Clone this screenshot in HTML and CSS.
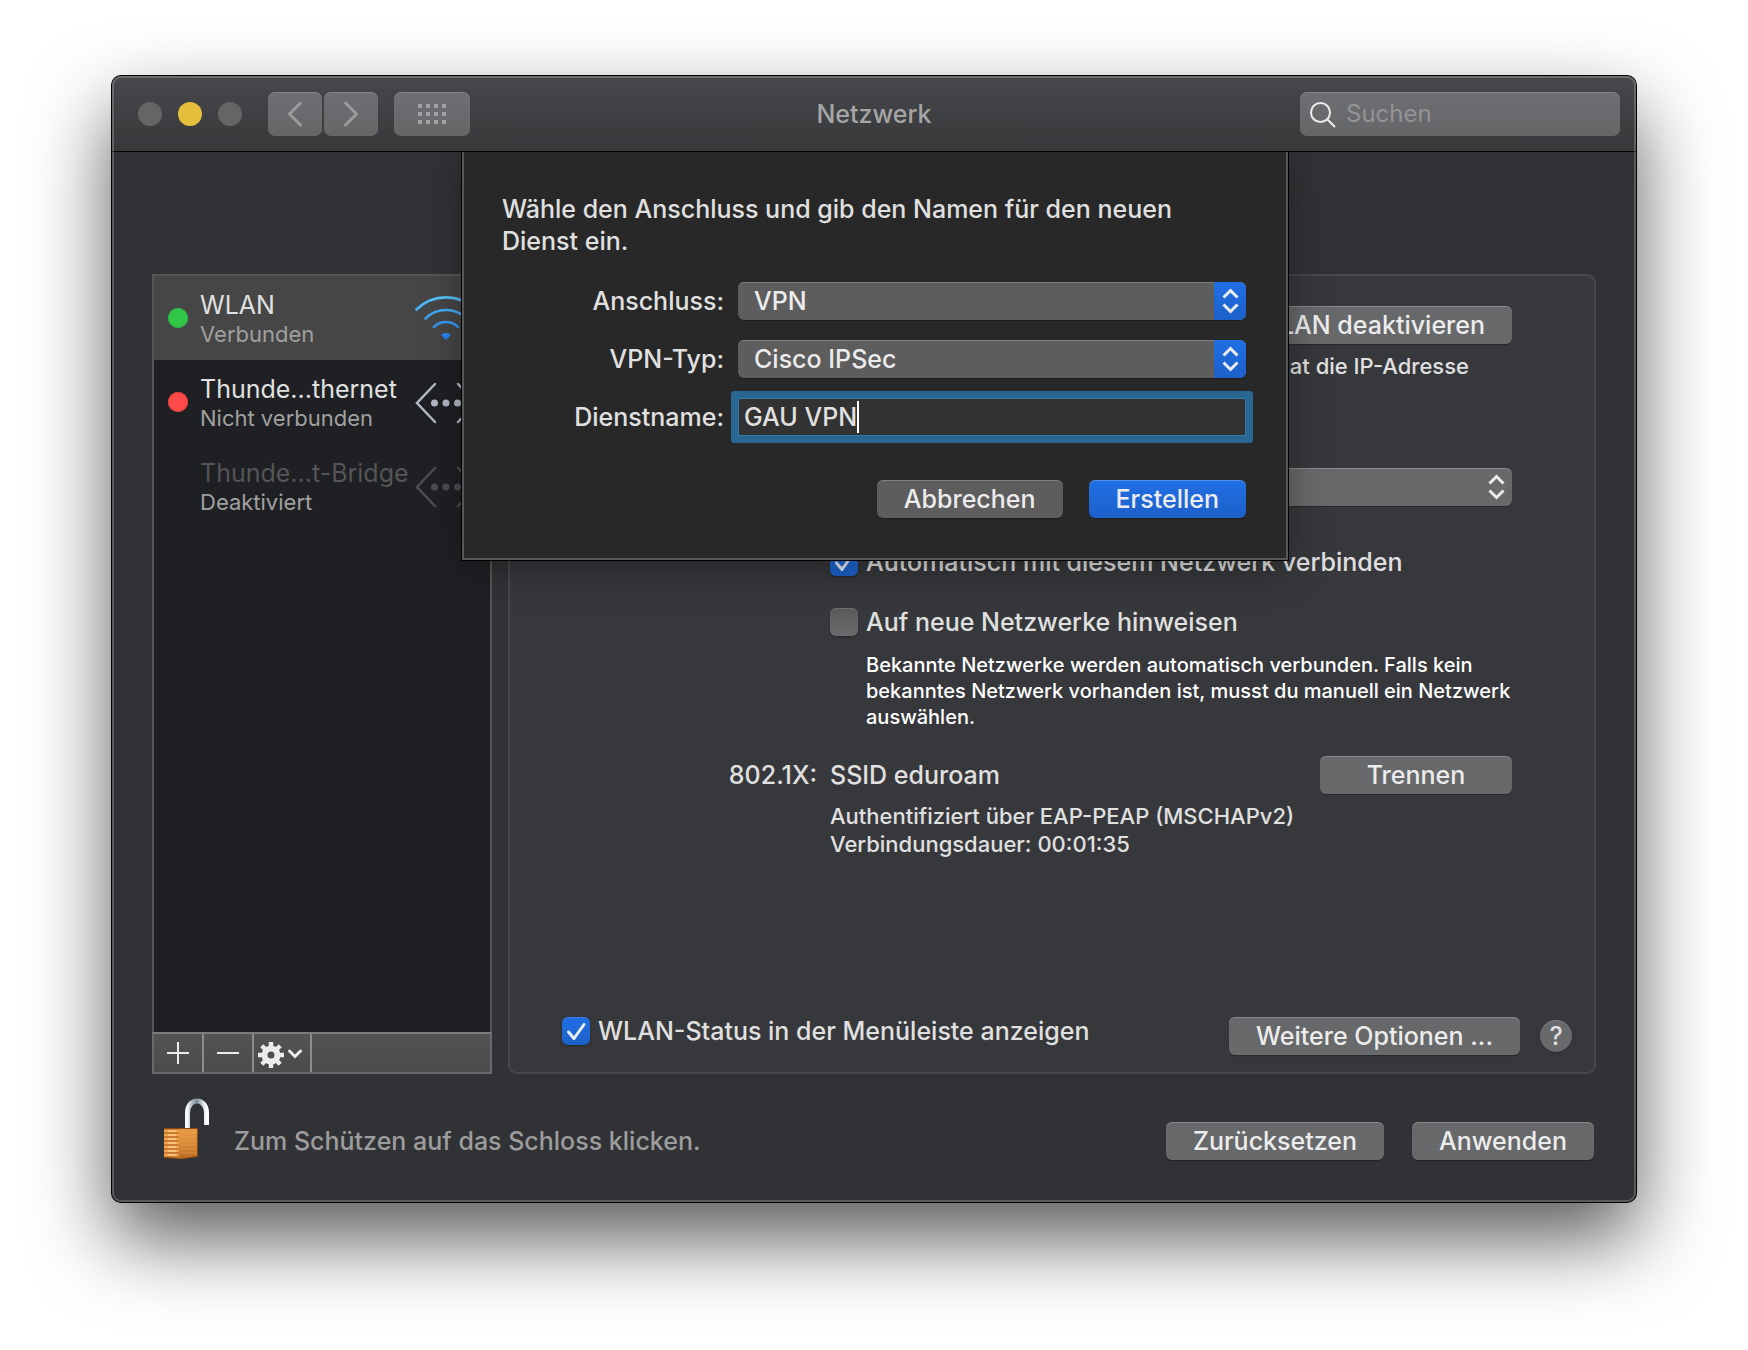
FILE: index.html
```html
<!DOCTYPE html>
<html lang="de">
<head>
<meta charset="utf-8">
<title>Netzwerk</title>
<link rel="stylesheet" href="styles.css">
</head>
<body>
<div class="window">
  <header class="titlebar">
    <div class="titlebar-left">
      <div class="lights">
        <button class="light" type="button" aria-label="Schließen"></button>
        <button class="light light-min" type="button" aria-label="Minimieren"></button>
        <button class="light" type="button" aria-label="Zoomen"></button>
      </div>
      <div class="nav">
        <button class="tool" type="button" aria-label="Zurück"><svg width="54" height="44" viewBox="0 0 54 44"><path d="M32.500 11 21.500 22l11 11"/></svg></button>
        <button class="tool" type="button" aria-label="Vorwärts"><svg width="54" height="44" viewBox="0 0 54 44"><path d="M21.500 11l11 11-11 11"/></svg></button>
      </div>
      <button class="tool" type="button" aria-label="Alle einblenden"><svg class="dots" width="76" height="44" viewBox="0 0 76 44"><path d="M24 12h4v4h-4zM32 12h4v4h-4zM40 12h4v4h-4zM48 12h4v4h-4zM24 20h4v4h-4zM32 20h4v4h-4zM40 20h4v4h-4zM48 20h4v4h-4zM24 28h4v4h-4zM32 28h4v4h-4zM40 28h4v4h-4zM48 28h4v4h-4z"/></svg></button>
    </div>
    <h1 class="title">Netzwerk</h1>
    <label class="search">
      <svg width="26" height="28" viewBox="0 0 26 28" aria-hidden="true"><circle cx="10.500" cy="12.500" r="9.500"/><path d="M17.300 19.300l7.700 7.700"/></svg>
      <input class="search-input" type="search" placeholder="Suchen" aria-label="Suchen">
    </label>
  </header>

  <main class="body">
    <div class="columns">
      <section class="sidebar">
        <ul class="services">
          <li class="service service-active">
            <span class="status status-on"></span>
            <div class="service-text"><div class="service-name">WLAN</div><div class="service-state">Verbunden</div></div>
            <svg class="service-icon" width="64" height="48" viewBox="0 0 64 48" aria-hidden="true">
              <defs><linearGradient id="wifi" gradientUnits="userSpaceOnUse" x1="0" y1="0" x2="0" y2="48"><stop offset="0" stop-color="#5ac8fa"/><stop offset="1" stop-color="#1d7cf2"/></linearGradient></defs>
              <g fill="none" stroke="url(#wifi)" stroke-width="2.600" stroke-linecap="round"><path d="M2.500 15.500a42 42 0 0 1 59 0"/><path d="M11.500 24.500a29 29 0 0 1 41 0"/><path d="M20 33a17 17 0 0 1 24 0"/></g>
              <path d="M27 41a7 7 0 0 1 10 0l-5 5z" fill="url(#wifi)"/>
            </svg>
          </li>
          <li class="service">
            <span class="status status-off"></span>
            <div class="service-text"><div class="service-name">Thunde...thernet</div><div class="service-state">Nicht verbunden</div></div>
            <svg class="service-icon ethernet" width="64" height="48" viewBox="0 0 64 48" aria-hidden="true"><path d="M21 6 3 25l18 19M44 6l18 19-18 19"/><g><circle cx="20.500" cy="25" r="3.500"/><circle cx="32" cy="25" r="3.500"/><circle cx="43.500" cy="25" r="3.500"/></g></svg>
          </li>
          <li class="service service-disabled">
            <span class="status"></span>
            <div class="service-text"><div class="service-name">Thunde...t-Bridge</div><div class="service-state">Deaktiviert</div></div>
            <svg class="service-icon ethernet" width="64" height="48" viewBox="0 0 64 48" aria-hidden="true"><path d="M21 6 3 25l18 19M44 6l18 19-18 19"/><g><circle cx="20.500" cy="25" r="3.500"/><circle cx="32" cy="25" r="3.500"/><circle cx="43.500" cy="25" r="3.500"/></g></svg>
          </li>
        </ul>
        <div class="list-bar">
          <button class="bar-button" type="button" aria-label="Hinzufügen"><svg width="48" height="38" viewBox="0 0 48 38"><path d="M13 19h22M24 8v22"/></svg></button>
          <button class="bar-button" type="button" aria-label="Entfernen"><svg width="48" height="38" viewBox="0 0 48 38"><path d="M13 19h22"/></svg></button>
          <button class="bar-button" type="button" aria-label="Aktionen"><svg width="56" height="38" viewBox="0 0 56 38">
            <g transform="translate(17 21)"><circle r="6.500" stroke-width="6"/><g stroke-width="4.400"><path d="M0-7v-6M0 7v6M-7 0h-6M7 0h6M-5-5l-4.200-4.200M5-5l4.200-4.200M-5 5l-4.200 4.200M5 5l4.200 4.200"/></g></g>
            <path class="round" d="M35.500 17l5.500 5.500 5.500-5.500"/></svg></button>
        </div>
      </section>

      <section class="panel">
        <div class="settings">
          <div class="row row-end"><button class="button" type="button">WLAN deaktivieren</button></div>
          <p class="address">hat die IP-Adresse</p>
          <div class="row network">
            <div class="popup">
              <select class="select" aria-label="Netzwerkname"><option value="eduroam" label=" "></option></select>
              <svg class="popup-arrows" width="32" height="38" viewBox="0 0 32 38" aria-hidden="true"><path d="M9.500 15.500l7-7 7 7M9.500 22.500l7 7 7-7"/></svg>
            </div>
          </div>
          <label class="check auto"><input type="checkbox" checked><span>Automatisch mit diesem Netzwerk verbinden</span></label>
          <label class="check ask"><input type="checkbox"><span>Auf neue Netzwerke hinweisen</span></label>
          <p class="hint">Bekannte Netzwerke werden automatisch verbunden. Falls kein bekanntes Netzwerk vorhanden ist, musst du manuell ein Netzwerk auswählen.</p>
          <div class="auth">
            <span class="auth-label">802.1X:</span>
            <span class="auth-value">SSID eduroam</span>
            <button class="button button-wide" type="button">Trennen</button>
          </div>
          <p class="auth-detail">Authentifiziert über EAP-PEAP (MSCHAPv2)<br>Verbindungsdauer: 00:01:35</p>
        </div>
        <div class="panel-bottom">
          <label class="check"><input type="checkbox" checked><span>WLAN-Status in der Menüleiste anzeigen</span></label>
          <div class="panel-actions">
            <button class="button more" type="button">Weitere Optionen ...</button>
            <button class="help" type="button" aria-label="Hilfe">?</button>
          </div>
        </div>
      </section>
    </div>

    <footer class="footer">
      <button class="lock" type="button" aria-label="Schloss">
        <svg width="48" height="62" viewBox="0 0 48 62">
          <defs>
            <linearGradient id="steel" x1="0" x2="1" y1="0" y2="0"><stop offset="0" stop-color="#f4f8fa"/><stop offset=".2" stop-color="#b4c0c7"/><stop offset=".5" stop-color="#7d8c95"/><stop offset=".8" stop-color="#cfdbe1"/><stop offset="1" stop-color="#ffffff"/></linearGradient>
            <pattern id="ribs" width="18" height="4" patternUnits="userSpaceOnUse"><rect width="18" height="4" fill="#c97a30"/><rect width="18" height="2" fill="#eea64f"/><rect x="5" width="8" height="2" fill="#f9c377"/></pattern>
            <linearGradient id="brass" x1="0" x2="0" y1="0" y2="1"><stop offset="0" stop-color="#e79a45"/><stop offset=".5" stop-color="#d78936"/><stop offset="1" stop-color="#b8691f"/></linearGradient>
          </defs>
          <path d="M24.500 31V15c0-16 19-16 19 0v12" fill="none" stroke="url(#steel)" stroke-width="5"/>
          <path d="M1 30h34v29l-16 2-18-1z" fill="#8a4812"/>
          <path d="M1 31h16v29l-16-1z" fill="url(#ribs)"/>
          <path d="M16 31h18v27l-18 3z" fill="url(#brass)"/>
          <path d="M17 35h16M17 39h16M17 43h16M17 47h16M17 51h16M17 55h16" stroke="#f0ab59" stroke-width="1" opacity=".5"/>
        </svg>
      </button>
      <span class="footer-text">Zum Schützen auf das Schloss klicken.</span>
      <div class="footer-actions">
        <button class="button" type="button">Zurücksetzen</button>
        <button class="button" type="button">Anwenden</button>
      </div>
    </footer>

    <form class="sheet" role="dialog" aria-label="Neuer Dienst">
      <p class="sheet-text">Wähle den Anschluss und gib den Namen für den neuen Dienst ein.</p>
      <div class="fields">
        <label class="field-label" for="port">Anschluss:</label>
        <div class="popup popup-blue">
          <select class="select" id="port"><option>VPN</option></select>
          <svg class="popup-arrows" width="32" height="38" viewBox="0 0 32 38" aria-hidden="true"><path d="M9.500 15.500l7-7 7 7M9.500 22.500l7 7 7-7"/></svg>
        </div>
        <label class="field-label" for="type">VPN-Typ:</label>
        <div class="popup popup-blue">
          <select class="select" id="type"><option>Cisco IPSec</option></select>
          <svg class="popup-arrows" width="32" height="38" viewBox="0 0 32 38" aria-hidden="true"><path d="M9.500 15.500l7-7 7 7M9.500 22.500l7 7 7-7"/></svg>
        </div>
        <label class="field-label" for="name">Dienstname:</label>
        <div class="name-box"><input class="name-input" id="name" type="text" size="6" value="GAU VPN"><span class="caret"></span></div>
      </div>
      <div class="sheet-actions">
        <button class="button button-dark" type="button">Abbrechen</button>
        <button class="button button-primary" type="button">Erstellen</button>
      </div>
    </form>
  </main>
</div>
</body>
</html>
```
FILE: styles.css
```css
* { box-sizing: border-box; }

body {
  margin: 0;
  padding: 76px 112px 148px;
  background: #fff;
  color: #e0e0e0;
  font: 500 25px/32px Inter, "Liberation Sans", sans-serif;
}

h1, p, ul { margin: 0; padding: 0; font-weight: inherit; }
button, input, select { margin: 0; font: inherit; color: inherit; }
button { border: 0; padding: 0; background: none; }
svg { display: block; }

.window {
  position: relative;
  display: flex;
  flex-direction: column;
  min-height: calc(100vh - 224px);
  border-radius: 9px;
  background: #313235;
  box-shadow: 0 0 0 1px #000, 0 36px 80px rgba(0, 0, 0, .66);
}

.window::after {
  content: "";
  position: absolute;
  inset: 0;
  border: 2px solid rgba(255, 255, 255, .2);
  border-radius: 9px;
  pointer-events: none;
}

/* Title bar */
.titlebar {
  display: grid;
  grid-template-columns: 1fr auto 1fr;
  align-items: center;
  height: 76px;
  padding: 0 16px;
  border-bottom: 1px solid #000;
  border-radius: 9px 9px 0 0;
  background: linear-gradient(#47484b, #37383a);
}

.titlebar-left { display: flex; align-items: center; gap: 16px; }
.lights { display: flex; gap: 16px; margin: 0 10px; }
.light { width: 24px; height: 24px; border-radius: 50%; background: #656567; }
.light-min { background: #e6bf3c; }
.nav { display: flex; gap: 2px; }

.tool {
  border-radius: 7px;
  background: linear-gradient(#6e6f72, #656668);
  box-shadow: inset 0 1px rgba(255, 255, 255, .15);
}
.tool path { fill: none; stroke: #9a9b9d; stroke-width: 3; stroke-linecap: round; }
.tool .dots path { fill: #a0a1a3; stroke: none; }

.title { font-size: 25px; color: #a5a5a6; }

.search {
  display: flex;
  align-items: center;
  justify-self: end;
  gap: 10px;
  width: 320px;
  height: 44px;
  padding: 0 10px;
  border-radius: 7px;
  background: linear-gradient(#6e6f72, #656668);
  box-shadow: inset 0 1px rgba(255, 255, 255, .15);
}
.search svg { flex: none; fill: none; stroke: #ececec; stroke-width: 2; }
.search-input { width: 100%; padding: 0; border: 0; outline: 0; background: none; font-size: 24px; font-weight: 400; }
.search-input::placeholder { color: #929395; opacity: 1; }

/* Body */
.body {
  position: relative;
  flex: 1;
  display: flex;
  flex-direction: column;
  padding: 122px 40px 42px;
}
.columns { flex: 1; display: flex; gap: 16px; }

.sidebar { flex: none; display: flex; flex-direction: column; width: 340px; }
.services {
  flex: 1;
  list-style: none;
  border: 2px solid #555656;
  border-bottom: 0;
  background: #1f2023;
  font-weight: 400;
}
.service { display: flex; align-items: center; gap: 12px; height: 84px; padding: 0 12px 0 14px; }
.service-active { background: #464646; }
.status { flex: none; width: 20px; height: 20px; border-radius: 50%; }
.status-on { background: #32c748; box-shadow: inset 0 0 0 1px #2cb140; }
.status-off { background: #fc4a48; box-shadow: inset 0 0 0 1px #e04341; }
.service-text { flex: 1; min-width: 0; padding-top: 2px; white-space: nowrap; }
.service-name { line-height: 30px; }
.service-state { font-size: 22px; line-height: 28px; color: #a0a0a0; }
.service-disabled .service-name { color: #545557; }
.service-icon { flex: none; }
.ethernet path { fill: none; stroke: #b4b9c6; stroke-width: 2.5px; stroke-linecap: round; }
.ethernet circle { fill: #b4b9c6; }
.service-disabled .ethernet { opacity: .3; }

.list-bar {
  display: flex;
  height: 42px;
  border: 2px solid #68696a;
  border-top-color: #7c7d7d;
  background: linear-gradient(#535456, #494a4c);
}
.bar-button { box-sizing: content-box; border-right: 2px solid #8b8c8c; }
.bar-button svg { fill: none; stroke: #ececec; stroke-width: 2; }
.bar-button .round { stroke-width: 3; stroke-linecap: round; }

.panel {
  flex: 1;
  display: flex;
  flex-direction: column;
  justify-content: space-between;
  min-height: 800px;
  padding: 30px 0 17px;
  border: 2px solid #47484b;
  border-radius: 9px;
  background: #37383b;
}
.settings { padding: 0 82px 0 320px; }
.row { display: grid; }
.row-end { justify-content: end; }
.address { margin-top: 8px; padding-right: 43px; font-size: 22px; line-height: 28px; text-align: right; }
.network { margin-top: 88px; }
.auto { margin-top: 42px; }
.ask { margin-top: 32px; }
.hint { margin: 16px -10px 0 36px; font-size: 20px; line-height: 26px; color: #fff; }
.auth { display: flex; align-items: center; margin: 26px 0 0 -160px; }
.auth-label { width: 147px; margin-right: 13px; text-align: right; }
.auth-value { flex: 1; }
.auth-detail { margin-top: 8px; font-size: 22px; line-height: 28px; }

.panel-bottom {
  display: flex;
  align-items: flex-start;
  justify-content: space-between;
  padding: 0 22px 0 52px;
}
.panel-actions { display: flex; align-items: center; gap: 20px; }

/* Controls */
.button {
  height: 38px;
  padding: 0 27px;
  border-radius: 6px;
  background: linear-gradient(#67686a, #68696b);
  box-shadow: inset 0 1px rgba(255, 255, 255, .22), 0 1px 1px rgba(0, 0, 0, .3);
  line-height: 38px;
  white-space: nowrap;
  color: #ececec;
}
.button-wide { width: 192px; }
.button-dark { background: #5d5d5d; }
.button-primary { background: linear-gradient(#216fe5, #1c60c9); }

.help {
  width: 32px;
  height: 32px;
  border-radius: 50%;
  background: #68696b;
  box-shadow: inset 0 1px rgba(255, 255, 255, .15), 0 1px 1px rgba(0, 0, 0, .3);
  line-height: 32px;
}

.check { display: flex; align-items: center; gap: 8px; height: 28px; white-space: nowrap; }
.check input {
  flex: none;
  appearance: none;
  width: 28px;
  height: 28px;
  border-radius: 6px;
  background: linear-gradient(#58595b, #6b6c6e);
  box-shadow: inset 0 1px rgba(255, 255, 255, .12), 0 1px 2px rgba(0, 0, 0, .35);
}
.check input:checked {
  background:
    url("data:image/svg+xml,%3Csvg xmlns='http://www.w3.org/2000/svg' width='28' height='28'%3E%3Cpath d='M6.500 15l5.500 6.500L22 7.500' fill='none' stroke='%23e8eefb' stroke-width='3' stroke-linecap='round' stroke-linejoin='round'/%3E%3C/svg%3E"),
    linear-gradient(#216fe5, #1c60c9);
}

.popup { display: grid; }
.popup > * { grid-area: 1 / 1; }
.select {
  appearance: none;
  width: 100%;
  height: 38px;
  padding: 0 40px 0 16px;
  border: 0;
  border-radius: 6px;
  background: #68696b;
  box-shadow: inset 0 1px rgba(255, 255, 255, .22), 0 1px 1px rgba(0, 0, 0, .3);
  color: #ececec;
}
.popup-arrows {
  justify-self: end;
  pointer-events: none;
  fill: none;
  stroke: #ececec;
  stroke-width: 3;
  stroke-linecap: butt;
}
.popup-blue .select { background: #5d5d5d; }
.popup-blue .popup-arrows { border-radius: 0 6px 6px 0; background: linear-gradient(#216fe5, #1c60c9); }

/* Footer */
.footer { display: flex; align-items: flex-end; height: 62px; margin-top: 24px; padding: 0 2px 0 11px; line-height: 38px; }
.lock { margin-right: 23px; }
.footer-text { flex: 1; color: #9d9d9e; }
.footer-actions { display: flex; gap: 28px; }

/* Sheet */
.sheet {
  position: absolute;
  top: 0;
  left: 2px;
  right: 0;
  width: 826px;
  margin: 0 auto;
  padding: 41px 40px 40px 38px;
  border: 2px solid #565757;
  border-top: 0;
  background: #282828;
  box-shadow: 0 0 0 1px #000, 0 8px 36px rgba(0, 0, 0, .35);
  clip-path: inset(0 -60px -80px -60px);
}
.sheet-text { max-width: 700px; }
.fields {
  display: grid;
  grid-template-columns: 222px 1fr;
  gap: 20px 14px;
  margin-top: 25px;
}
.field-label { line-height: 38px; text-align: right; }
.name-box {
  display: flex;
  align-items: center;
  height: 38px;
  padding-left: 5px;
  border: 1px solid #3379a5;
  background: #323232;
  box-shadow: 0 0 0 7px #296792;
  border-radius: 1px;
}
.name-input { field-sizing: content; padding: 0; border: 0; outline: 0; background: none; }
.caret { width: 2px; height: 32px; background: #fff; }
.sheet-actions { display: flex; justify-content: flex-end; gap: 26px; margin-top: 44px; }
```
